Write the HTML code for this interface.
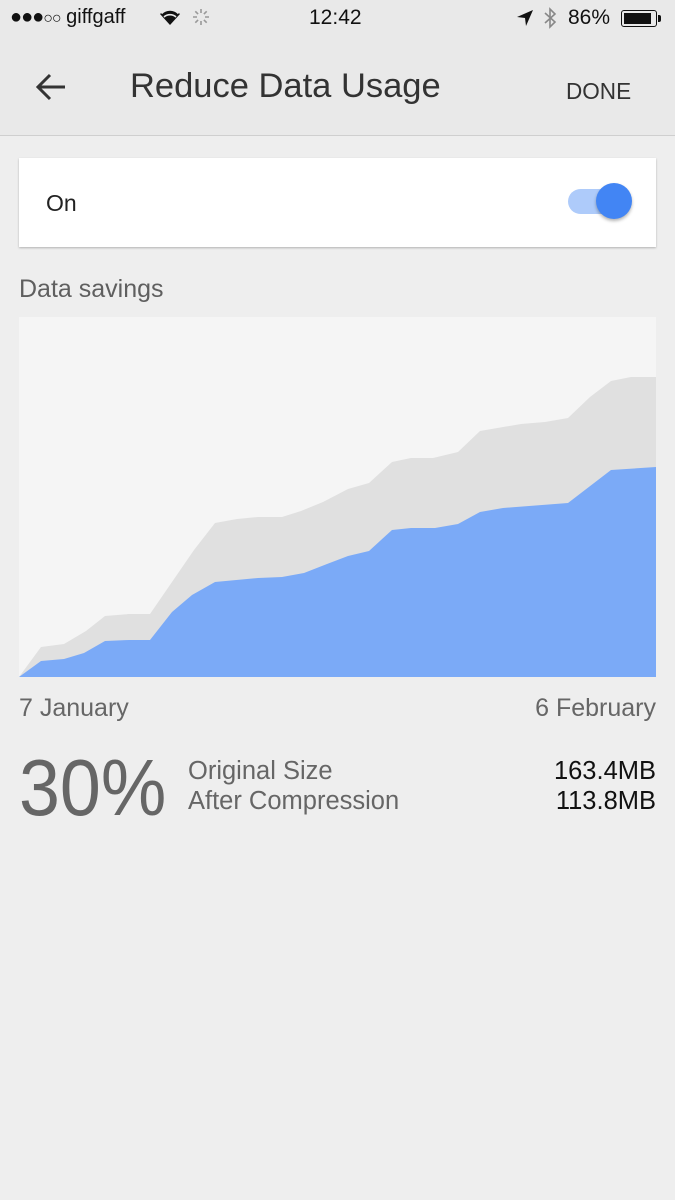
<!DOCTYPE html>
<html><head><meta charset="utf-8"><style>
*{margin:0;padding:0;box-sizing:border-box}
body{width:675px;height:1200px;background:#eeeeee;font-family:"Liberation Sans",sans-serif;position:relative;overflow:hidden}
.t{position:absolute;white-space:nowrap;transform-origin:0 0}
</style></head><body>
<div style="position:absolute;left:0;top:0;width:675px;height:136px;background:#e9e9e9;border-bottom:1px solid #cfcfcf"></div>
<!-- status bar -->
<div class="t" style="left:10px;top:6px;font-size:20px;color:#111"><span style="letter-spacing:-1px">●●●</span><span style="font-size:16px;letter-spacing:-1px">○○</span> giffgaff</div>
<svg style="position:absolute;left:158px;top:8px" width="24" height="18" viewBox="0 0 24 18"><path d="M12 17 L2 6 A14 14 0 0 1 22 6 Z" fill="#111"/><path d="M6 9 A9 9 0 0 1 18 9" stroke="#e9e9e9" stroke-width="1.6" fill="none"/><path d="M3.5 5.5 A12 12 0 0 1 20.5 5.5" stroke="#e9e9e9" stroke-width="1.6" fill="none"/></svg>
<svg style="position:absolute;left:192px;top:8px" width="18" height="18" viewBox="0 0 18 18" stroke="#999" stroke-width="1.6"><path d="M9 1v4M9 13v4M1 9h4M13 9h4M3.3 3.3l2.8 2.8M11.9 11.9l2.8 2.8M3.3 14.7l2.8-2.8M11.9 6.1l2.8-2.8"/></svg>
<div class="t" style="left:309px;top:6px;font-size:21px;color:#111">12:42</div>
<svg style="position:absolute;left:516px;top:9px" width="18" height="18" viewBox="0 0 18 18"><path d="M17 1 L1 8 L9 9 L10 17 Z" fill="#111"/></svg>
<svg style="position:absolute;left:542px;top:6px" width="16" height="24" viewBox="0 0 16 24" stroke="#888" stroke-width="1.6" fill="none"><path d="M3 7 L13 16 L8 21 V3 L13 8 L3 17"/></svg>
<div class="t" style="left:568px;top:6px;font-size:21px;color:#111">86%</div>
<div style="position:absolute;left:621px;top:10px;width:36px;height:17px;border:1.5px solid #111;border-radius:3px;padding:1.5px"><div style="width:27px;height:11px;background:#111"></div></div>
<div style="position:absolute;left:658px;top:15px;width:3px;height:7px;background:#111;border-radius:0 2px 2px 0"></div>
<!-- header -->
<svg style="position:absolute;left:34px;top:72px" width="34" height="30" viewBox="0 0 34 30" stroke="#333" stroke-width="3" fill="none"><path d="M31 15H4M16 3L4 15l12 12"/></svg>
<div class="t" style="left:130px;top:67px;font-size:34.5px;color:#333">Reduce Data Usage</div>
<div class="t" style="left:566px;top:78px;font-size:23px;color:#333;transform:scaleX(0.98)">DONE</div>
<!-- card -->
<div style="position:absolute;left:19px;top:158px;width:637px;height:89px;background:#fff;box-shadow:0 1px 2px rgba(0,0,0,.25)"></div>
<div class="t" style="left:46px;top:190px;font-size:23px;color:#222">On</div>
<div style="position:absolute;left:568px;top:189px;width:60px;height:25px;background:#aecbfa;border-radius:13px"></div>
<div style="position:absolute;left:596px;top:183px;width:36px;height:36px;background:#4285f4;border-radius:50%;box-shadow:0 2px 3px rgba(0,0,0,.3)"></div>
<div class="t" style="left:19px;top:275px;font-size:25px;color:#5f5f5f">Data savings</div>
<!-- chart -->
<svg style="position:absolute;left:0;top:0" width="675" height="700">
<rect x="19" y="317" width="637" height="360" fill="#f5f5f5"/>
<polygon fill="#e0e0e0" points="19,677 41,647 64,644 86,631 105,616 129,614 150,614 194,550 215,523 237,519 258,517 282,517 301,511 323,502 348,489 369,483 392,462 411,458 433,458 458,452 480,431 521,424 545,422 568,418 590,397 611,381 631,377 656,377 656,677"/>
<polygon fill="#7baaf7" points="19,677 41,661 64,659 84,653 105,641 129,640 150,640 172,612 192,595 215,582 258,578 282,577 304,573 327,564 348,556 369,551 392,530 411,528 435,528 458,524 480,512 503,508 568,503 611,470 656,467 656,677"/>
</svg>
<div class="t" style="left:19px;top:694px;font-size:25px;color:#666">7 January</div>
<div class="t" style="right:19px;top:694px;font-size:25px;color:#666;transform-origin:100% 0">6 February</div>
<div class="t" style="left:19px;top:742px;font-size:80px;color:#666;transform:scaleX(0.92)">30%</div>
<div class="t" style="left:188px;top:757px;font-size:25.5px;color:#666">Original Size</div>
<div class="t" style="left:188px;top:787px;font-size:25.5px;color:#666">After Compression</div>
<div class="t" style="right:19px;top:757px;font-size:25.5px;color:#111">163.4MB</div>
<div class="t" style="right:19px;top:787px;font-size:25.5px;color:#111">113.8MB</div>
</body></html>
